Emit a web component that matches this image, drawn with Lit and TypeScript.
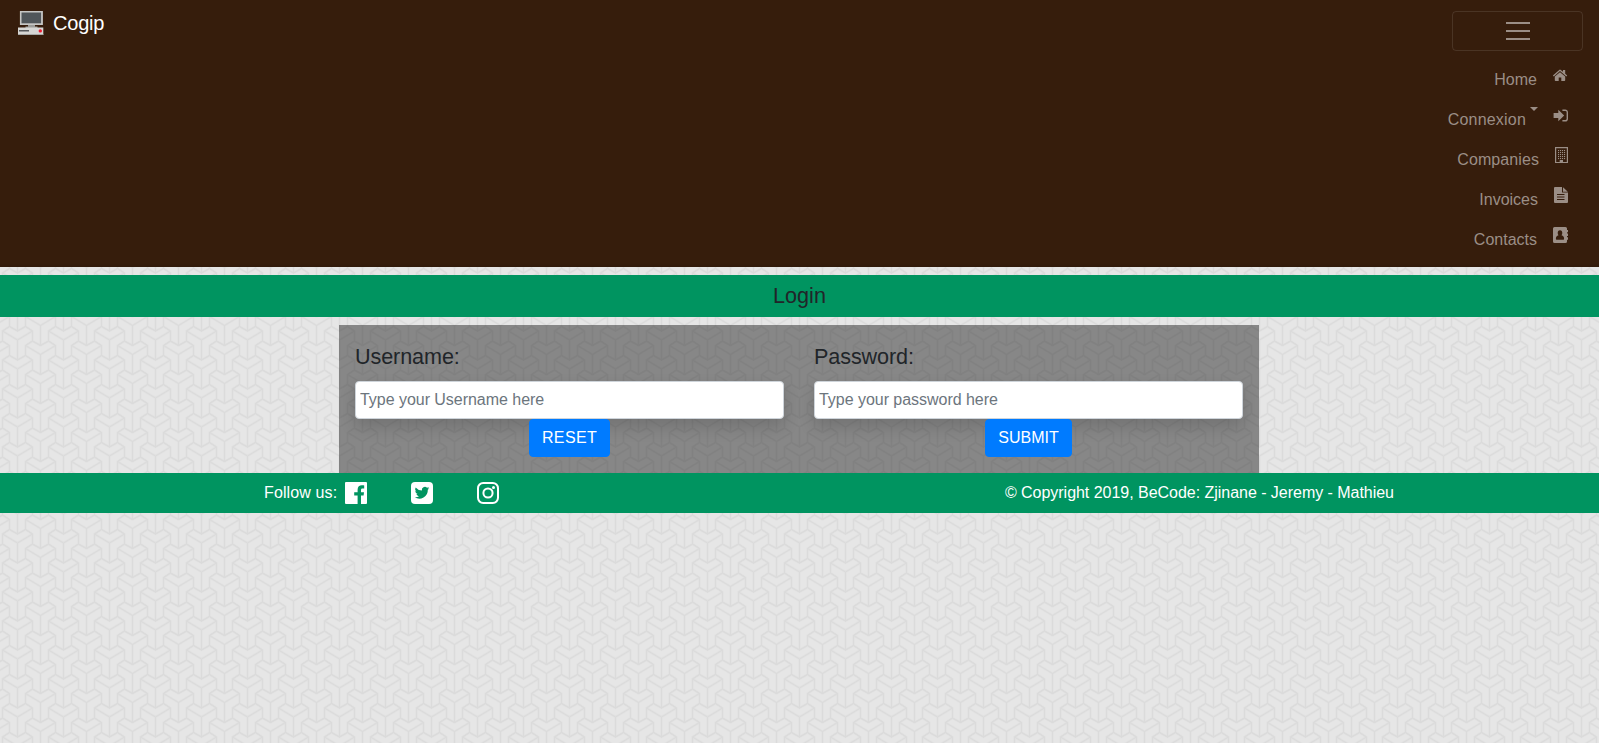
import { LitElement, html, css, svg, unsafeCSS } from "lit";
import { customElement } from "lit/decorators.js";

const block = "M17.5 12L9.5 7.5L2.5 12V22L9.5 26.5V36.5L17.5 41L25.5 36.5V26.5L32.5 22V12L25.5 7.5L17.5 12M2.5 12L17.5 21L32.5 12M17.5 21V41";
const offsets = [[0, -29], [0, 0], [-23, -14.5], [-23, 14.5], [23, -14.5], [23, 14.5]];

function shift(d: string, dx: number, dy: number): string {
  return d.replace(/([MLV])([\d.]+)(?: ([\d.]+))?/g, (_m, c, a, b) =>
    c === "V" ? `V${+a + dy}` : `${c}${+a + dx} ${+b + dy}`
  );
}

const lattice = offsets.map(([x, y]) => shift(block, x, y)).join("");
const tile =
  "data:image/svg+xml," +
  encodeURIComponent(
    `<svg xmlns="http://www.w3.org/2000/svg" width="46" height="29"><rect width="46" height="29" fill="#e6e6e6"/><g fill="none"><path stroke="#e1e1e1" stroke-width="2.2" d="${lattice}"/><path stroke="#dbdbdb" stroke-width="1" d="${lattice}"/></g></svg>`
  );

const dots = [3, 5, 7, 9, 11].flatMap((y) => [4, 6, 8, 10].map((x) => svg`<rect x=${x} y=${y} width="1.1" height="1.1"/>`));

const icons = {
  home: svg`<path d="M7 5.200L12.200 9.400V13.200a.8.800 0 0 1-.8.800H8.300v-3.600H5.700V14H2.600a.8.800 0 0 1-.8-.8V9.400z"/><path d="M-.1 8.400L6.200 2.900a1.200 1.200 0 0 1 1.600 0l2.200 1.900V3h2.200v3.700l2 1.700-.9 1L7 4 .8 9.400z"/>`,
  signin: svg`<path d="M.6 6h4.700V2.800L11.200 8.500l-5.900 5.700V11H.6z"/><path d="M9.400 3.200h2.800a2.100 2.100 0 0 1 2.100 2.100v6.400a2.100 2.100 0 0 1-2.100 2.100H9.400" fill="none" stroke="currentColor" stroke-width="1.400"/>`,
  building: svg`<path fill-rule="evenodd" d="M2 0h13v16H2zM3.200 1.200v13.800h3.500v-2h3.300v2h3.800V1.200z"/><g transform="translate(1 0)">${dots}</g>`,
  file: svg`<path fill-rule="evenodd" d="M1 1a1 1 0 0 1 1-1h7v5.500h6V15a1 1 0 0 1-1 1H2a1 1 0 0 1-1-1zM4 7v1h7.500V7zm0 2.500v1h7.500v-1zM4 12v1h7.500v-1z"/><path d="M10 0.200L14.800 4.700H10z"/>`,
  contacts: svg`<path fill-rule="evenodd" d="M1.500 0h11A1.500 1.500 0 0 1 14 1.500V3h1v2.300h-1v1.300h1V9h-1v1.300h1v2.400h-1v1.800a1.500 1.500 0 0 1-1.500 1.500h-11A1.500 1.500 0 0 1 0 14.500v-13A1.500 1.500 0 0 1 1.500 0zM7 3.300C5.400 3.300 4.700 4.500 4.700 6c0 1 .3 1.700.8 2.200-1.800.5-2.600 1.400-2.600 3.800 0 .5.300.800.800.800h6.600c.5 0 .8-.3.800-.8 0-2.400-.8-3.300-2.600-3.800.5-.5.800-1.200.800-2.200 0-1.500-.7-2.700-2.300-2.700z"/>`,
};

const links = [
  { label: "Home", icon: icons.home, cls: "home" },
  { label: "Connexion", icon: icons.signin, cls: "connexion" },
  { label: "Companies", icon: icons.building, cls: "companies" },
  { label: "Invoices", icon: icons.file, cls: "invoices" },
  { label: "Contacts", icon: icons.contacts, cls: "contacts" },
];

@customElement("app-root")
export class AppRoot extends LitElement {
  static styles = css`
    :host {
      display: block;
      min-height: 100vh;
      background: #e5e5e5 url("${unsafeCSS(tile)}");
      font: 16px/24px "Liberation Sans", Arial, sans-serif;
      color: #212529;
    }
    * { box-sizing: border-box; }
    svg { display: block; flex: none; overflow: visible; }
    .navbar {
      height: 267px;
      padding: 0 16px;
      background: linear-gradient(transparent 263px, rgba(0, 0, 0, 0.1)) #361d0c;
      display: flex;
      justify-content: space-between;
      align-items: flex-start;
    }
    .brand {
      display: flex;
      align-items: center;
      gap: 9px;
      padding-top: 8px;
      color: #fff;
      font-size: 20px;
      line-height: 30px;
      letter-spacing: -0.2px;
    }
    .menu { padding-top: 11px; display: flex; flex-direction: column; align-items: flex-end; }
    .toggler {
      width: 131px;
      height: 40px;
      padding: 0;
      border: 1px solid rgba(255, 255, 255, 0.1);
      border-radius: 4px;
      background: none;
      color: #9b8e86;
      display: flex;
      align-items: center;
      justify-content: center;
    }
    .links { list-style: none; margin: 8px 14px 0 0; padding: 0; color: #9b8e86; }
    .link { height: 40px; display: flex; justify-content: flex-end; align-items: center; gap: 16px; }
    .link svg { margin-bottom: 8px; }
    .link span { padding-top: 2px; }
    .invoices { gap: 15px; }
    .companies { gap: 14px; letter-spacing: 0.08px; }
    .connexion { gap: 0; }
    .connexion span { letter-spacing: 0.2px; }
    .caret {
      align-self: flex-start;
      margin: 8px 12px 0 4px;
      border: 4.800px solid transparent;
      border-top-color: #9b8e86;
      border-bottom: 0;
    }
    .connexion svg { margin-left: 3px; }
    .title {
      margin: 8px 0;
      padding: 8px;
      height: 42px;
      background: #009460;
      text-align: center;
      font-size: 21.6px;
      line-height: 26px;
      font-weight: 400;
    }
    .form {
      width: 920px;
      height: 148px;
      margin-left: 339px;
      padding: 16px;
      background: rgba(0, 0, 0, 0.41);
      display: grid;
      grid-template-columns: 429px 429px;
      column-gap: 30px;
    }
    .field { display: flex; flex-direction: column; align-items: center; }
    .label { align-self: stretch; font-size: 21.6px; line-height: 32px; margin-bottom: 8px; letter-spacing: -0.1px; }
    .input {
      width: 100%;
      height: 38px;
      padding: 0 4px;
      border: 1px solid #ced4da;
      border-radius: 4px;
      background: #fff;
      font: inherit;
      letter-spacing: -0.035px;
      box-shadow: 0 8px 16px rgba(0, 0, 0, 0.15);
    }
    .input::placeholder { color: #6c757d; opacity: 1; }
    .btn {
      height: 38px;
      padding: 6px 12px;
      border: 1px solid #007bff;
      border-radius: 4px;
      background: #007bff;
      color: #fff;
      font: inherit;
      position: relative;
    }
    .btn[type="reset"] { letter-spacing: 0.35px; }
    .footer {
      height: 40px;
      padding: 0 205px 0 264px;
      background: #009460;
      color: #fff;
      display: flex;
      justify-content: space-between;
      align-items: center;
    }
    .follow { display: flex; align-items: center; letter-spacing: 0.12px; }
    .copyright { letter-spacing: -0.03px; }
    .social { display: flex; gap: 44px; margin-left: 7.500px; }
  `;

  render() {
    return html`
      <nav class="navbar">
        <div class="brand">
          <svg width="28" height="26" viewBox="0 0 28 26">
            <path fill="#c6c6c4" d="M4 1h23v14H4z" transform="translate(-.1 0)" />
            <path fill="#50565a" d="M5.500 2.500h19.600v10.800H5.500z" />
            <path fill="#9b9b98" d="M12 15h7v1.500h2.500V18h-12v-1.500H12z" />
            <path fill="#d6d6d4" d="M2 17.500h25.300V25H2z" />
            <path fill="#a8a8a6" d="M2 24h25.300v1H2z" />
            <path fill="#55575a" d="M3 20h10v1.500H3z" />
            <circle cx="24.300" cy="20.900" r="1.700" fill="#f21930" />
          </svg>
          <span>Cogip</span>
        </div>
        <div class="menu">
          <button class="toggler" aria-label="Toggle navigation">
            <svg width="24" height="18" viewBox="0 0 24 18"><path d="M0 1h24M0 9h24M0 17h24" stroke="currentColor" stroke-width="2" /></svg>
          </button>
          <ul class="links">
            ${links.map(
              (l) => html`<li class="link ${l.cls}">
                <span>${l.label}</span>
                ${l.cls === "connexion" ? html`<i class="caret"></i>` : ""}
                <svg width="16" height="16" viewBox="0 0 16 16" fill="currentColor">${l.icon}</svg>
              </li>`
            )}
          </ul>
        </div>
      </nav>
      <h1 class="title">Login</h1>
      <form class="form">
        <div class="field">
          <label class="label" for="user">Username:</label>
          <input class="input" id="user" placeholder="Type your Username here" />
          <button class="btn" type="reset">RESET</button>
        </div>
        <div class="field">
          <label class="label" for="pass">Password:</label>
          <input class="input" id="pass" type="password" placeholder="Type your password here" />
          <button class="btn" type="button">SUBMIT</button>
        </div>
      </form>
      <footer class="footer">
        <div class="follow">
          <span>Follow us:</span>
          <div class="social">
            <svg width="22" height="22" viewBox="0 0 22 22"><rect width="22" height="22" rx="1" fill="#fff" /><path fill="#009460" d="M12.600 22v-8.500H9.200v-3.300h3.400V7.700c0-2.900 1.700-4.400 4.300-4.400 1.200 0 2 .1 2.300.1v3h-1.600c-1.300 0-1.600.6-1.600 1.600v2.200h3l-.4 3.300H16V22z" /></svg>
            <svg width="22" height="22" viewBox="0 0 22 22"><rect width="22" height="22" rx="4" fill="#fff" /><path fill="#009460" d="M18.300 6.300c-.5.300-1.100.4-1.700.5.600-.4 1.100-1 1.300-1.700-.6.400-1.200.600-1.900.700a3 3 0 0 0-5.100 2.700A8.500 8.500 0 0 1 4.700 5.400a3 3 0 0 0 .9 4c-.5 0-.9-.2-1.300-.4 0 1.400 1 2.600 2.400 2.900-.4.100-.9.100-1.300 0 .4 1.200 1.500 2 2.800 2.100A6 6 0 0 1 3.700 15.200a8.500 8.500 0 0 0 13.100-7.500c.6-.4 1.100-.9 1.500-1.400z" /></svg>
            <svg width="22" height="22" viewBox="0 0 22 22" fill="none" stroke="#fff" stroke-width="2"><rect x="1" y="1" width="20" height="20" rx="5.200" /><circle cx="11" cy="11" r="4.600" /><circle cx="16.500" cy="5.500" r="1.500" fill="#fff" stroke="none" /></svg>
          </div>
        </div>
        <span class="copyright">© Copyright 2019, BeCode: Zjinane - Jeremy - Mathieu</span>
      </footer>
    `;
  }
}
